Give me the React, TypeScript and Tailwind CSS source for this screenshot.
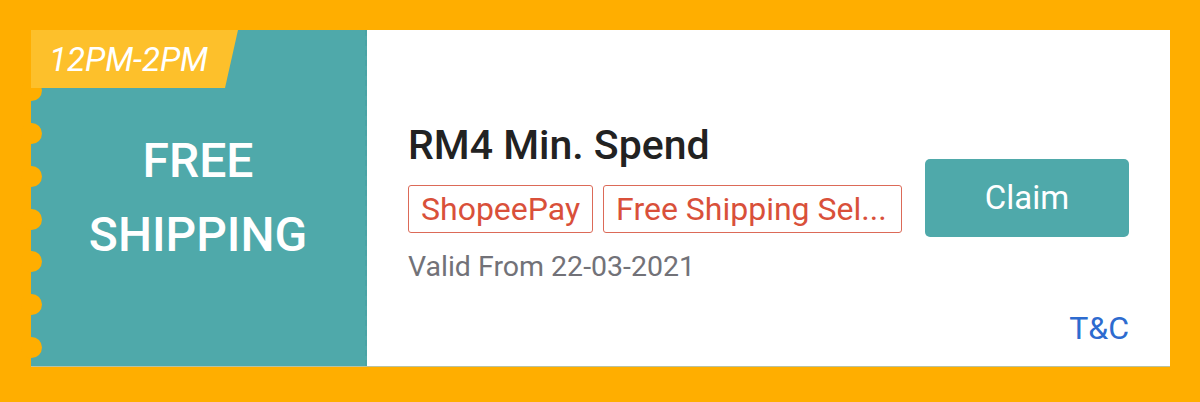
import React from 'react';

const scallops = [60, 103, 146, 189, 231, 274, 317];

const Voucher = () => {
  return (
    <div className="flex h-[336px] w-[1139px] bg-white shadow-[0_1px_0_#b9c2a0]">
      {/* left stub */}
      <div className="relative flex w-[336px] shrink-0 items-center justify-center border-r-2 border-dashed border-[#4aa3a5] bg-[#4fa9aa]">
        {scallops.map((top) => (
          <span
            key={top}
            className="absolute left-[-10px] h-[21px] w-[21px] rounded-full bg-[#ffae00]"
            style={{ top: top - 10 }}
          />
        ))}
        <div className="absolute left-0 top-0 flex h-[58px] w-[207px] items-center bg-[#fdc02b] pl-[18px] [clip-path:polygon(0_0,100%_0,calc(100%-13px)_100%,0_100%)]">
          <span className="text-[33px] italic leading-none text-white">12PM-2PM</span>
        </div>
        <div className="text-center text-[48px] font-medium leading-[74px] text-white">
          <div>FREE</div>
          <div>SHIPPING</div>
        </div>
      </div>

      {/* body */}
      <div className="flex flex-1 flex-col pl-[41px] pr-[41px] pt-[90px]">
        <div className="flex items-start justify-between">
          <div className="flex flex-col">
            <div className="text-[41px] font-medium leading-[50px] text-[#222222]">RM4 Min. Spend</div>
            <div className="mt-[15px] flex gap-[10px]">
              <span className="flex h-[48px] items-center rounded-[3px] border border-[#dc6a58] px-[12px] text-[32px] text-[#d9503a]">
                ShopeePay
              </span>
              <span className="flex h-[48px] items-center rounded-[3px] border border-[#dc6a58] pl-[12px] pr-[14px] text-[32px] text-[#d9503a]">
                Free Shipping Sel...
              </span>
            </div>
            <div className="mt-[16px] text-[28.5px] leading-[36px] text-[#727278]">Valid From 22-03-2021</div>
          </div>
          <button className="mt-[39px] flex h-[78px] w-[204px] items-center justify-center rounded-[5px] bg-[#4fa9aa] text-[33px] text-white">
            Claim
          </button>
        </div>
        <div className="mt-auto mb-[20px] self-end text-[32px] leading-[36px] text-[#2d6bcf]">T&amp;C</div>
      </div>
    </div>
  );
};

export default function App() {
  return (
    <div
      className="flex h-[402px] w-[1200px] bg-[#ffae00] pl-[31px] pt-[30px]"
      style={{ fontFamily: 'Roboto, "Noto Sans", sans-serif' }}
    >
      <Voucher />
    </div>
  );
}
